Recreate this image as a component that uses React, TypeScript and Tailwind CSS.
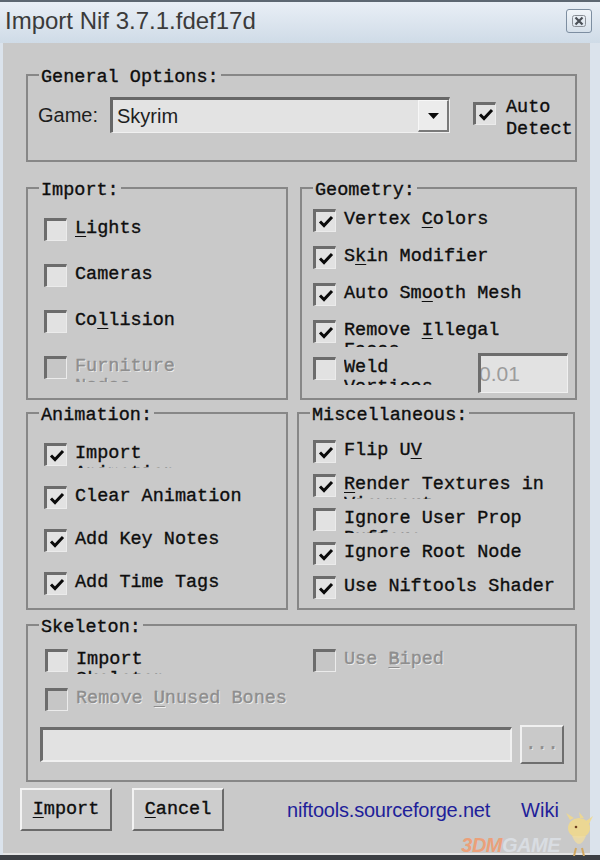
import type { ReactNode } from "react";

const MONO =
  "font-['Liberation_Mono','Courier_New',monospace] text-[18.5px] leading-[20px] [-webkit-text-stroke:0.35px_currentColor]";
const SANS = "font-['Liberation_Sans',Arial,sans-serif]";

function Box({ checked = false, disabled = false }: { checked?: boolean; disabled?: boolean }) {
  return (
    <span
      className={`flex h-[23px] w-[23px] shrink-0 items-center justify-center border-t-[3px] border-l-[3px] border-r border-b border-t-[#6c6c6c] border-l-[#6c6c6c] border-r-[#ebebeb] border-b-[#ebebeb] ${
        disabled ? "bg-[#c6c6c6]" : "bg-[#e2e2e2]"
      }`}
    >
      {checked && (
        <svg width="16" height="13" viewBox="0 0 16 13">
          <path d="M2 6.5 L6 10.5 L14 2" fill="none" stroke="#0a0a0a" strokeWidth="3" />
        </svg>
      )}
    </span>
  );
}

interface ItemProps {
  label: ReactNode;
  wrap?: string;
  clip?: string;
  checked?: boolean;
  disabled?: boolean;
  className?: string;
}

// checkbox row; long labels wrap into a clipped second line like the real dialog
function Item({ label, wrap, clip = "h-[25px]", checked, disabled, className = "" }: ItemProps) {
  return (
    <div className={`flex h-[23px] items-start gap-[8px] ${className}`}>
      <Box checked={checked} disabled={disabled} />
      <div
        className={`mt-[1px] ${MONO} ${wrap ? `${clip} overflow-hidden` : ""} ${
          disabled ? "text-[#8e8e8e] [text-shadow:1px_1px_0_#efefef]" : "text-[#0e0e0e]"
        }`}
      >
        <div className="whitespace-nowrap">{label}</div>
        {wrap && <div className="whitespace-nowrap">{wrap}</div>}
      </div>
    </div>
  );
}

function U({ children }: { children: ReactNode }) {
  return <u className="underline-offset-[3px]">{children}</u>;
}

function Group({ title, className = "", children }: { title: string; className?: string; children: ReactNode }) {
  return (
    <div className={`relative border-2 border-[#878787] ${className}`}>
      <span className={`absolute -top-[8px] left-[11px] bg-[#c9c9c9] px-[2px] text-[#0e0e0e] ${MONO}`}>{title}</span>
      {children}
    </div>
  );
}

function Button({ children, className = "" }: { children: ReactNode; className?: string }) {
  return (
    <button
      className={`flex h-[43px] w-[92px] items-center justify-center border-2 border-t-[#f3f3f3] border-l-[#f3f3f3] border-r-[#6a6a6a] border-b-[#6a6a6a] bg-[#cdcdcd] text-[#0e0e0e] ${MONO} ${className}`}
    >
      {children}
    </button>
  );
}

export default function App() {
  return (
    <div className="relative flex h-[860px] w-[600px] flex-col overflow-hidden bg-[#dbe3ec]">
      {/* title bar */}
      <div className="flex h-[43px] shrink-0 items-start justify-between border-t-2 border-[#5d6772] bg-linear-to-b from-[#e9eff6] to-[#cfdbe7] pl-[5px] pr-[8px]">
        <span className={`mt-[5px] text-[24px] leading-[28px] text-[#3b3b3b] ${SANS}`}>Import Nif 3.7.1.fdef17d</span>
        <span className="mt-[7px] flex h-[24px] w-[26px] items-center justify-center rounded-[3px] border border-[#7d8ea1] bg-linear-to-b from-[#f1f5f9] to-[#d6e0ea]">
          <svg width="14" height="12" viewBox="0 0 14 12">
            <rect x="0.5" y="0.5" width="13" height="11" rx="2" fill="none" stroke="#8a8f96" />
            <path d="M3.5 2.5 L10.5 9.5 M10.5 2.5 L3.5 9.5" stroke="#4a4f56" strokeWidth="2.2" />
          </svg>
        </span>
      </div>

      {/* dialog body */}
      <div className="ml-[3px] mr-[10px] flex h-[810px] shrink-0 flex-col bg-[#c9c9c9] pl-[23px] pr-[13px] pt-[31px]">
        <Group title="General Options:" className="h-[88px]">
          <div className="flex items-start pl-[10px] pt-[21px]">
            <span className={`w-[72px] pt-[6px] text-[20px] leading-[24px] text-[#1e1e1e] ${SANS}`}>Game:</span>
            <div className="flex h-[36px] w-[340px] border-t-[3px] border-l-[3px] border-r border-b border-t-[#676767] border-l-[#676767] border-r-[#f0f0f0] border-b-[#f0f0f0] bg-[#e3e3e3]">
              <span className={`flex flex-1 items-center pl-[4px] text-[20px] text-[#1e1e1e] ${SANS}`}>Skyrim</span>
              <span className="flex w-[31px] items-center justify-center border-t border-l border-r-2 border-b-2 border-t-[#f7f7f7] border-l-[#f7f7f7] border-r-[#7a7a7a] border-b-[#7a7a7a] bg-[#ececec]">
                <svg width="11" height="6" viewBox="0 0 11 6">
                  <path d="M0 0 H11 L5.5 6 Z" fill="#0a0a0a" />
                </svg>
              </span>
            </div>
            <span className="ml-[23px] mt-[5px]">
              <Box checked />
            </span>
            <div className={`ml-[10px] mt-[0px] leading-[22px] text-[#0e0e0e] ${MONO}`}>
              <div>Auto</div>
              <div>Detect</div>
            </div>
          </div>
        </Group>

        <div className="mt-[25px] flex gap-[12px]">
          <Group title="Import:" className="h-[213px] w-[262px]">
            <div className="flex flex-col gap-[23px] pl-[16px] pt-[29px]">
              <Item label={<><U>L</U>ights</>} />
              <Item label="Cameras" />
              <Item label={<>Co<U>l</U>lision</>} />
              <Item label="Furniture" wrap="Nodes" clip="h-[25px]" disabled />
            </div>
          </Group>
          <Group title="Geometry:" className="h-[213px] flex-1">
            <div className="flex flex-col gap-[14px] pl-[11px] pt-[20px]">
              <Item checked label={<>Vertex <U>C</U>olors</>} />
              <Item checked label={<>S<U>k</U>in Modifier</>} />
              <Item checked label={<>Auto Sm<U>o</U>oth Mesh</>} />
              <Item checked label={<>Remove <U>I</U>llegal</>} wrap="Faces" clip="h-[26px]" />
              <div className="flex items-start">
                <Item label="Weld" wrap="Vertices" clip="h-[27px]" />
                <div className="ml-auto mr-[7px] -mt-[4px] flex h-[40px] w-[90px] items-center overflow-hidden border-t-[3px] border-l-[3px] border-r border-b border-t-[#6c6c6c] border-l-[#6c6c6c] border-r-[#f0f0f0] border-b-[#f0f0f0] bg-[#e2e2e2]">
                  <span className={`-ml-[2px] text-[21px] text-[#9c9c9c] ${SANS}`}>0.01</span>
                </div>
              </div>
            </div>
          </Group>
        </div>

        <div className="mt-[12px] flex gap-[9px]">
          <Group title="Animation:" className="h-[198px] w-[262px]">
            <div className="flex flex-col gap-[20px] pl-[16px] pt-[29px]">
              <Item checked label="Import" wrap="Animation" clip="h-[23.5px]" />
              <Item checked label="Clear Animation" />
              <Item checked label="Add Key Notes" />
              <Item checked label="Add Time Tags" />
            </div>
          </Group>
          <Group title="Miscellaneous:" className="h-[198px] w-[278px]">
            <div className="flex flex-col gap-[11px] pl-[14px] pt-[26px]">
              <Item checked label={<>Flip U<U>V</U></>} />
              <Item checked label={<><U>R</U>ender Textures in</>} wrap="Viewport" clip="h-[24px]" />
              <Item label="Ignore User Prop" wrap="Buffers" clip="h-[24px]" />
              <Item checked label="Ignore Root Node" />
              <Item checked label="Use Niftools Shader" />
            </div>
          </Group>
        </div>

        <Group title="Skeleton:" className="mt-[14px] h-[158px]">
          <div className="flex flex-col pl-[17px] pt-[23px]">
            <div className="flex">
              <div className="w-[268px]">
                <Item label="Import" wrap="Skeleton" clip="h-[24px]" />
              </div>
              <Item disabled label={<>Use <U>B</U>iped</>} />
            </div>
            <Item disabled className="mt-[16px]" label={<>Remove <U>U</U>nused Bones</>} />
            <div className="-ml-[5px] mt-[16px] flex items-start">
              <div className="h-[35px] w-[472px] border-t-[3px] border-l-[3px] border-r-2 border-b-2 border-t-[#6c6c6c] border-l-[#6c6c6c] border-r-[#f0f0f0] border-b-[#f0f0f0] bg-[#e2e2e2]" />
              <div className={`-mt-[2px] ml-[8px] flex h-[39px] w-[44px] items-center justify-center border-2 border-t-[#f0f0f0] border-l-[#f0f0f0] border-r-[#6e6e6e] border-b-[#6e6e6e] text-[#8e8e8e] [text-shadow:1px_1px_0_#efefef] ${MONO}`}>
                ...
              </div>
            </div>
          </div>
        </Group>

        <div className="-ml-[6px] mt-[6px] flex h-[43px] items-center">
          <Button>
            <span><U>I</U>mport</span>
          </Button>
          <Button className="ml-[20px]">
            <span><U>C</U>ancel</span>
          </Button>
          <span className={`ml-[63px] text-[20px] tracking-[-0.2px] text-[#1f1f9a] ${SANS}`}>niftools.sourceforge.net</span>
          <span className={`ml-[31px] text-[20px] text-[#1f1f9a] ${SANS}`}>Wiki</span>
        </div>
      </div>

      {/* bottom frame edge */}
      <div className="ml-[3px] mr-[10px] h-[2px] bg-[#e4e4e4]" />
      <div className="flex-1 bg-[#3c3f44]" />

      {/* watermark */}
      <div className="absolute bottom-[4px] right-[4px] flex items-end gap-[2px]">
        <span className={`text-[20px] font-bold italic leading-[22px] tracking-[-0.5px] ${SANS}`}>
          <span className="text-[#eba07a]">3DM</span>
          <span className="text-[#d9dde2]">GAME</span>
        </span>
        <svg width="34" height="44" viewBox="0 0 34 44">
          <ellipse cx="17" cy="16" rx="11" ry="10" fill="#f2d98a" opacity="0.85" />
          <path d="M8 8 L4 1 L12 6 M18 6 L17 0 L22 6 M24 9 L31 4 L27 12" fill="#f2d98a" opacity="0.85" />
          <path d="M10 24 Q17 40 24 24 Z" fill="#f0dca0" opacity="0.8" />
          <path d="M14 36 L12 44 M20 36 L22 44" stroke="#d2a860" strokeWidth="2" />
          <circle cx="14" cy="15" r="1.3" fill="#704020" />
        </svg>
      </div>
    </div>
  );
}
